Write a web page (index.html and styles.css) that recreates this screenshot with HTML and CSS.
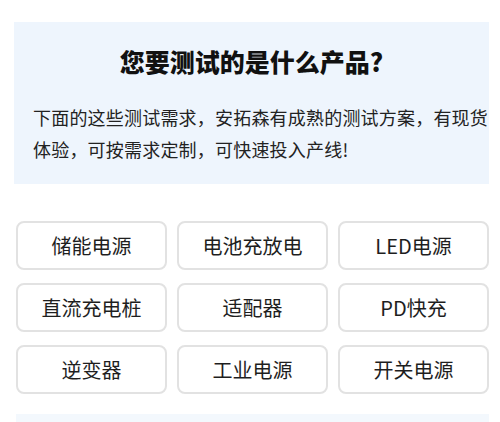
FILE: index.html
```html
<!DOCTYPE html>
<html lang="zh-CN">
<head>
    <meta charset="UTF-8">
    <meta name="viewport" content="width=device-width, initial-scale=1.0">
    <title>测试产品</title>
    <link rel="stylesheet" href="styles.css">
</head>
<body>

    <div class="intro">
        <h1 class="intro-title">您要测试的是什么产品?</h1>
        <p class="intro-text">下面的这些测试需求，安拓森有成熟的测试方案，有现货体验，可按需求定制，可快速投入产线!</p>
    </div>

    <div class="products">
        <div class="product">储能电源</div>
        <div class="product">电池充放电</div>
        <div class="product">LED电源</div>
        <div class="product">直流充电桩</div>
        <div class="product">适配器</div>
        <div class="product">PD快充</div>
        <div class="product">逆变器</div>
        <div class="product">工业电源</div>
        <div class="product">开关电源</div>
    </div>

    <div class="next-panel"></div>

</body>
</html>
```

FILE: styles.css
```css
body {
  margin: 0;
  background-color: #fff;
  color: #1e1e1e;
  font-family: "Noto Sans CJK SC", "Noto Sans", sans-serif;
}

.intro {
  margin: 22px 0 0 14px;
  width: 475px;
  box-sizing: border-box;
  padding: 24px 0 19px 19px;
  background-color: #eef5fd;
}

.intro-title {
  margin: 0 0 25px -19px;
  font-size: 25px;
  line-height: 30px;
  font-weight: 900;
  text-align: center;
  color: #111;
}

.intro-text {
  margin: 0;
  font-size: 18px;
  line-height: 32px;
  letter-spacing: 0.2px;
  color: #222;
}

.products {
  margin: 37px 0 0 16px;
  width: 473px;
  display: grid;
  grid-template-columns: repeat(3, 1fr);
  grid-auto-rows: 49px;
  column-gap: 10px;
  row-gap: 13px;
}

.product {
  display: flex;
  align-items: center;
  justify-content: center;
  border: 2px solid #e2e2e2;
  border-radius: 8px;
  font-size: 20px;
  color: #1e1e1e;
}

.next-panel {
  margin: 20px 0 0 16px;
  width: 473px;
  height: 8px;
  background-color: #f3f8fd;
}
```
